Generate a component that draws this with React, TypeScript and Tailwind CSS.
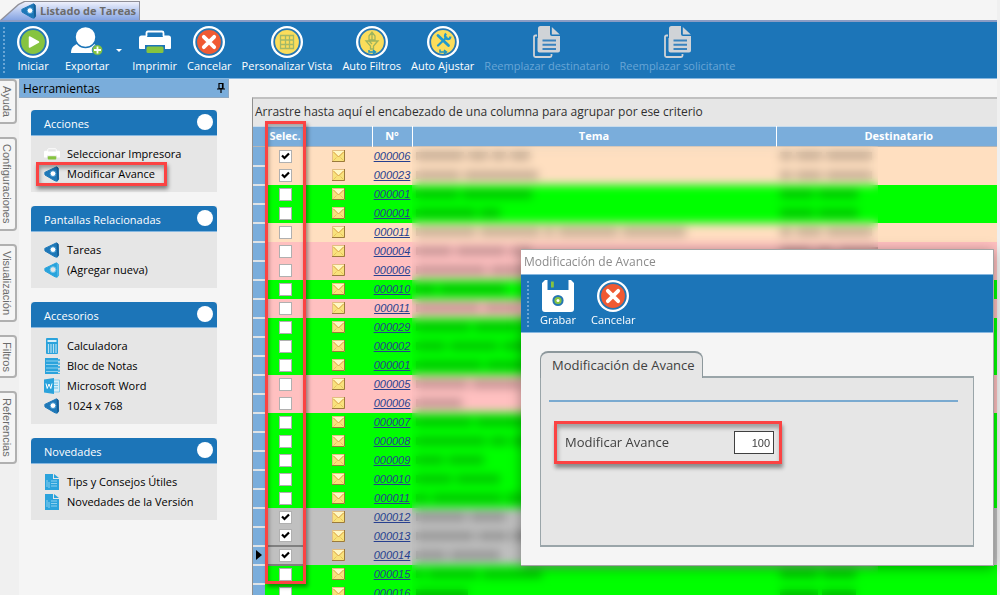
import type { ReactNode } from 'react';

type RowTone = 'peach' | 'green' | 'pink' | 'gray';

type TaskRow = {
  number: string;
  tone: RowTone;
  checked?: boolean;
  current?: boolean;
  subject: number[];
  person: number[];
};

const toneClasses: Record<RowTone, string> = {
  peach: 'bg-[#ffdfc0]',
  green: 'bg-[#00ff00]',
  pink: 'bg-[#ffc0c0]',
  gray: 'bg-[#c0c0c0]',
};

const rows: TaskRow[] = [
  { number: '000006', tone: 'peach', checked: true, subject: [48, 20, 14, 20], person: [12, 26, 46] },
  { number: '000023', tone: 'peach', checked: true, subject: [44, 74], person: [12, 26, 46] },
  { number: '000001', tone: 'green', subject: [42, 70], person: [34, 40] },
  { number: '000001', tone: 'green', subject: [60, 20], person: [34, 40] },
  { number: '000011', tone: 'peach', subject: [60, 60, 10, 60, 64], person: [12, 26, 46] },
  { number: '000004', tone: 'pink', subject: [36, 50, 20], person: [32, 18, 40] },
  { number: '000006', tone: 'pink', subject: [70, 40], person: [32, 40] },
  { number: '000010', tone: 'green', subject: [20, 66], person: [34, 40] },
  { number: '000011', tone: 'pink', subject: [64, 36], person: [34, 40] },
  { number: '000029', tone: 'green', subject: [54, 44, 20], person: [34, 40] },
  { number: '000002', tone: 'green', subject: [30, 48, 30], person: [34, 40] },
  { number: '000001', tone: 'green', subject: [66, 40], person: [34, 40] },
  { number: '000005', tone: 'pink', subject: [52, 50], person: [34, 40] },
  { number: '000006', tone: 'pink', subject: [46], person: [34, 40] },
  { number: '000007', tone: 'green', subject: [56, 50], person: [34, 40] },
  { number: '000008', tone: 'green', subject: [70, 18, 20], person: [34, 40] },
  { number: '000009', tone: 'green', subject: [28, 36], person: [34, 40] },
  { number: '000010', tone: 'green', subject: [36, 44], person: [34, 40] },
  { number: '000011', tone: 'green', subject: [12, 70, 20], person: [34, 40] },
  { number: '000012', tone: 'gray', checked: true, subject: [50, 36], person: [34, 40] },
  { number: '000013', tone: 'gray', checked: true, subject: [58, 30, 30], person: [34, 40] },
  { number: '000014', tone: 'gray', checked: true, current: true, subject: [30, 50], person: [34, 40] },
  { number: '000015', tone: 'green', subject: [8, 50, 60], person: [38, 34] },
  { number: '000016', tone: 'green', subject: [52], person: [38, 34] },
];

function DropIcon({ light = false, className = 'size-4' }: { light?: boolean; className?: string }) {
  return (
    <svg viewBox="0 0 16 16" className={className} aria-hidden="true">
      <path
        d="M12.6.8 14.200 2.500 14.600 13 13.200 15.200 11 14.800 1 9 .8 6.400Z"
        fill={light ? '#29a3dc' : '#1e78b8'}
        stroke={light ? '#29a3dc' : '#1e78b8'}
        strokeLinejoin="round"
      />
      <path d="m12.800.6 1.600 1.400.4 11-1.400 2.200-.6-8Z" fill={light ? '#4db5e5' : '#175d92'} />
      <circle cx="9" cy="7.600" r="2.900" fill={light ? '#e6e6e6' : '#fff'} stroke={light ? '#6cc4ec' : '#3b94cf'} />
    </svg>
  );
}

function PrinterIcon({ className = 'size-8' }: { className?: string }) {
  return (
    <svg viewBox="0 0 32 32" className={className} aria-hidden="true">
      <path d="M7.500 10V7q0-1.500 1.500-1.500h14Q24.500 5.500 24.500 7v3" fill="none" stroke="#fff" strokeWidth="1.800" />
      <path d="M0 22V12Q0 9.500 2.500 9.500h5l1 1.500h15l1-1.500h5Q32 9.500 32 12v10q0 1-1 1h-5v-4H6v4H1q-1 0-1-1Z" fill="#fff" />
      <rect x="7.500" y="20.500" width="17" height="6.500" rx="1.500" fill="#86c440" />
    </svg>
  );
}

function RingIcon({ fill, children }: { fill: string; children: ReactNode }) {
  return (
    <svg viewBox="0 0 32 32" className="size-8" aria-hidden="true">
      <circle cx="16" cy="16" r="16" fill="#fff" />
      <circle cx="16" cy="16" r="12.800" fill={fill} stroke="#2676b2" strokeWidth="1.800" />
      {children}
    </svg>
  );
}

function StartIcon() {
  return (
    <RingIcon fill="#86c440">
      <path d="M12.500 11v10l9-5Z" fill="#fff" stroke="#fff" strokeWidth="1.500" strokeLinejoin="round" />
    </RingIcon>
  );
}

function CancelIcon() {
  return (
    <RingIcon fill="#f05a33">
      <path d="m10.800 10.800 10.400 10.400m0-10.400-10.400 10.400" stroke="#fff" strokeWidth="3.800" strokeLinecap="round" />
    </RingIcon>
  );
}

function ExportIcon() {
  return (
    <svg viewBox="0 0 32 32" className="size-8" aria-hidden="true">
      <path d="M0 27c0-5 2-7.500 8-10h13c5 2 7 5 7 10Z" fill="#fff" />
      <circle cx="14.500" cy="11" r="10.500" fill="#fff" stroke="#1c75b8" strokeWidth="1.500" />
      <circle cx="26.500" cy="24" r="5.300" fill="#86c440" stroke="#1c75b8" strokeWidth=".8" />
      <path d="M26.500 20.500v7m-3.500-3.500h7" stroke="#fff" strokeWidth="1.800" />
    </svg>
  );
}

function GridIcon() {
  return (
    <RingIcon fill="#fbdd5b">
      <path d="M9.500 9.500h13v13h-13Zm5 0v13m4-13v13M9.500 14h13m-13 4.500h13" fill="none" stroke="#a3b968" strokeWidth="1.300" />
    </RingIcon>
  );
}

function FilterIcon() {
  return (
    <RingIcon fill="#fbdd5b">
      <path
        d="M16 6v8m-3-4 3-4 3 4v4h-6Zm-3 5h12l-4.500 5v3h-3v-3Zm3 0 3 3m6-3-3 3"
        fill="none"
        stroke="#9fb45d"
        strokeWidth="1.300"
      />
      <path d="M13 24v2h6m-2-2 2.500 2-2.500 2" fill="none" stroke="#1f93bd" strokeWidth="1.500" />
    </RingIcon>
  );
}

function AdjustIcon() {
  return (
    <RingIcon fill="#fbdd5b">
      <path d="m11 9.500 10.500 10" stroke="#2199cc" strokeWidth="2.800" strokeLinecap="round" />
      <path d="m19.500 11.500-8.500 8" stroke="#2199cc" strokeWidth="2.200" strokeLinecap="round" />
      <path d="M19 7.500q-2.500 3.500 1 5.500 3 .5 3.500-2.500" fill="none" stroke="#2199cc" strokeWidth="2.200" />
      <path d="M13 23.500v2.500h6m-2-2 2.500 2-2.500 2" fill="none" stroke="#1f93bd" strokeWidth="1.500" />
    </RingIcon>
  );
}

function CopyIcon() {
  return (
    <svg viewBox="0 0 32 32" className="size-8" aria-hidden="true">
      <path d="M6 9.500H4.500Q3 9.500 3 11v18.500Q3 31 4.500 31H19q1.500 0 1.500-1.500V28" fill="none" stroke="#d0d3d7" strokeWidth="1.800" />
      <path d="M9.500 0H19v8q0 2 2 2h8v14.500q0 2-2 2H8.500q-2 0-2-2V12H7V2.500Q7 0 9.500 0Z" fill="#d0d3d7" />
      <path d="m20.800 1 8 7.500h-8Z" fill="#d0d3d7" />
      <path d="M11.500 14.500H25m-13.500 4.300H25m-13.500 4.200H25" stroke="#3a83be" strokeWidth="2" />
    </svg>
  );
}

function SaveIcon() {
  return (
    <svg viewBox="0 0 32 32" className="size-8" aria-hidden="true">
      <path d="M3 0h2.500v10h21V0H29l3 3v26q0 3-3 3H3q-3 0-3-3V3Z" fill="#fff" />
      <rect x="9" y="1.500" width="2.800" height="6" fill="#86c440" />
      <circle cx="16" cy="20.500" r="4.600" fill="#86c440" stroke="#2676b2" strokeWidth="2" />
      <circle cx="16" cy="20.500" r="1.500" fill="#fff" />
    </svg>
  );
}

function CalculatorIcon() {
  return (
    <svg viewBox="0 0 16 16" className="size-4" aria-hidden="true">
      <rect x="2" y="0" width="12" height="16" rx="1" fill="#2ba3dc" />
      <path d="M3.500 2h9v2h-9Z" fill="#d8eef8" />
      <path d="M4.500 6v9m2.500-9v9m2.500-9v9m2.500-9v9" stroke="#b5dff2" strokeWidth="1.200" />
    </svg>
  );
}

function NotepadIcon() {
  return (
    <svg viewBox="0 0 16 16" className="size-4" aria-hidden="true">
      <path d="M1 0h13v16H1Z" fill="#2ba3dc" />
      <path d="M2 3h14M2 6.500h14M2 10h14M2 13.500h14" stroke="#8dd0ee" />
      <path d="M15 1v15" stroke="#2ba3dc" strokeDasharray="2 1.500" strokeWidth="1.500" />
    </svg>
  );
}

function WordIcon() {
  return (
    <svg viewBox="0 0 16 16" className="size-4" aria-hidden="true">
      <path d="M8 2h7.500v12H8Z" fill="#d8eef8" stroke="#72c3e8" strokeWidth=".8" />
      <path d="M10 5h4m-4 2.500h4M10 10h4" stroke="#72c3e8" />
      <path d="m0 1.500 10-1.500v16L0 14.500Z" fill="#2ba3dc" />
      <path d="m2 5.500 1.200 5L5 6l1.800 4.500 1.200-5" fill="none" stroke="#fff" />
    </svg>
  );
}

function PageIcon() {
  return (
    <svg viewBox="0 0 16 16" className="size-4" aria-hidden="true">
      <path d="M1 0h8v5h6v11H1Z" fill="#2ba3dc" />
      <path d="m10 0 5 4h-5Z" fill="#2ba3dc" />
      <path d="M7 7h6M7 9.500h6M7 12h6M3 6v7m2-5v6" stroke="#8dd0ee" />
    </svg>
  );
}

function MailIcon() {
  return (
    <svg viewBox="0 0 13 12" className="mx-auto h-3 w-[13px]" aria-hidden="true">
      <path d="M0 0h13v12H0Z" fill="#f8e27c" />
      <path d="M1 1h11L6.500 6.500Z" fill="#fff8c4" />
      <path d="M.5 11.500V.500h12" fill="none" stroke="#e3bd83" />
      <path d="M12.500 0v11.500H0" fill="none" stroke="#9b7a3c" />
      <path d="m1.500 2 5 5 5-5" fill="none" stroke="#d9a04a" />
      <path d="m1.500 10.500 3-3m7 3-3-3" fill="none" stroke="#e8c25c" />
    </svg>
  );
}

type ToolButtonProps = { label: string; icon: ReactNode; disabled?: boolean };

function ToolButton({ label, icon, disabled }: ToolButtonProps) {
  return (
    <button
      type="button"
      disabled={disabled}
      className="flex shrink-0 flex-col items-center whitespace-nowrap text-[11px] leading-4 text-white disabled:text-[#68a5d6]"
    >
      {icon}
      <span>{label}</span>
    </button>
  );
}

function Grip() {
  return <div className="my-px w-0 self-stretch border-l-2 border-dotted border-[#69a5d5]" />;
}

type PanelItem = { label: string; icon: ReactNode; highlighted?: boolean };

function SidePanel({ title, items }: { title: string; items: PanelItem[] }) {
  return (
    <section className="bg-[#e6e6e6]">
      <h2 className="flex h-[26px] items-center justify-between rounded-t border-b border-[#86b7e0] bg-[#1c75b8] pr-1 pl-[13px] text-[11px] text-white">
        <span className="pt-[3px]">{title}</span>
        <button type="button" aria-label={`Contraer ${title}`} className="mb-px size-4 rounded-full bg-white" />
      </h2>
      <ul className="py-2">
        {items.map((item) => (
          <li key={item.label} className="relative h-5 px-[13px]">
            <a href="#" className="flex h-full items-center gap-[7px] whitespace-nowrap">
              {item.icon}
              {item.label}
            </a>
            {item.highlighted && (
              <span className="absolute -inset-y-[2px] right-[50px] left-[5px] border-[3px] border-[#fb4343] shadow-[1px_3px_4px_rgba(0,0,0,0.45),inset_1px_3px_4px_rgba(0,0,0,0.35)]" />
            )}
          </li>
        ))}
      </ul>
    </section>
  );
}

function Smudges({ widths }: { widths: number[] }) {
  return (
    <div className="flex gap-1 pl-1" aria-hidden="true">
      {widths.map((width, i) => (
        <span key={i} className="h-2 shrink-0 bg-black/25" style={{ width }} />
      ))}
    </div>
  );
}

function TaskTable() {
  const headCell = 'border-r border-white p-0 font-bold';
  return (
    <div className="relative">
      <table className="w-full table-fixed border-collapse">
        <colgroup>
          <col className="w-3" />
          <col className="w-10" />
          <col className="w-[67px]" />
          <col className="w-10" />
          <col />
          <col className="w-[221px]" />
        </colgroup>
        <thead>
          <tr className="h-5 border-y border-t-[#c9dcec] border-b-[#b5b5b5] bg-[#7aaddb] text-white">
            <th className="p-0" aria-label="Fila" />
            <th className="p-0 font-bold">Selec.</th>
            <th className={headCell} aria-label="Correo" />
            <th className={headCell}>N°</th>
            <th className={headCell}>Tema</th>
            <th className="p-0 font-bold">
              <span className="pl-6">Destinatario</span>
            </th>
          </tr>
        </thead>
        <tbody>
          {rows.map((row, i) => (
            <tr key={i} className={`h-[19px] ${toneClasses[row.tone]}`}>
              <td className="border-b-2 border-[#dfe3e6] bg-[#7aaddb] p-0">
                {row.current && (
                  <svg viewBox="0 0 6 10" className="ml-[3px] h-[10px] w-[6px]" aria-hidden="true">
                    <path d="M0 0v10l6-5Z" />
                  </svg>
                )}
              </td>
              <td className={row.current ? 'border-y-2 border-[#808080] p-0' : 'p-0'}>
                <div className="relative mx-auto size-[13px]">
                  <input
                    type="checkbox"
                    defaultChecked={row.checked}
                    aria-label={`Seleccionar ${row.number}`}
                    className="peer block size-[13px] appearance-none border border-[#b0b0b0] bg-white"
                  />
                  <svg
                    viewBox="0 0 13 13"
                    className="pointer-events-none absolute inset-0 hidden peer-checked:block"
                    aria-hidden="true"
                  >
                    <path d="M3 5.500 5.500 8 10 3.500" fill="none" stroke="#000" strokeWidth="2.200" />
                  </svg>
                </div>
              </td>
              <td className="p-0">
                <MailIcon />
              </td>
              <td className="p-0 text-center leading-[14px]">
                <a href="#" className="font-['Liberation_Sans',sans-serif] text-[11px] text-[#27408f] italic underline">
                  {row.number}
                </a>
              </td>
              <td className="p-0">
                <Smudges widths={row.subject} />
              </td>
              <td className="p-0">
                <Smudges widths={row.person} />
              </td>
            </tr>
          ))}
        </tbody>
      </table>
      <div className="absolute top-5 right-[119px] bottom-0 left-[159px] backdrop-blur-[5px]" />
      <div className="absolute -top-[5px] left-3 h-[463px] w-[41px] border-[3px] border-[#fb4343] shadow-[2px_3px_4px_rgba(0,0,0,0.4),inset_1px_3px_4px_rgba(0,0,0,0.3)]" />
    </div>
  );
}

function ProgressDialog() {
  return (
    <div
      role="dialog"
      aria-labelledby="dialog-title"
      className="absolute top-[249px] right-[6px] w-[473px] border border-l-0 border-[#a5a5a5] bg-[#f5f5f5] text-[#404040] shadow-[0_2px_12px_rgba(0,0,0,0.35)]"
    >
      <h2 id="dialog-title" className="h-6 bg-white px-[3px] text-[12px] leading-6 text-[#8b8b8b]">
        Modificación de Avance
      </h2>
      <div className="flex h-[59px] items-start gap-[15px] border-y border-[#86b7e0] bg-[#1c75b8] px-[6px] pt-[5px] pb-1">
        <div className="flex items-start gap-[11px]">
          <Grip />
          <ToolButton label="Grabar" icon={<SaveIcon />} />
        </div>
        <ToolButton label="Cancelar" icon={<CancelIcon />} />
      </div>
      <div className="px-[19px] py-[18px]">
        <div role="tablist" className="flex">
          <button
            type="button"
            role="tab"
            aria-selected="true"
            className="relative z-10 -mb-[2px] h-[27px] rounded-t-lg border border-t-2 border-b-0 border-[#8d989c] bg-[#e6e6e6] pr-[7px] pl-[11px] text-[13px]"
          >
            Modificación de Avance
          </button>
        </div>
        <div className="border border-y-2 border-[#9aa5a9] bg-[#e6e6e6] px-2 pt-[22px] pb-[81px]">
          <hr className="mr-[7px] border-t-2 border-[#7aaad0]" />
          <div className="mt-[19px] ml-[5px] flex h-[43px] w-[228px] items-center justify-between border-[3px] border-[#fb4343] pr-[5px] pl-2 text-[13px] shadow-[1px_4px_4px_rgba(0,0,0,0.4),inset_1px_4px_4px_rgba(0,0,0,0.3)]">
            <label htmlFor="progress">Modificar Avance</label>
            <input
              id="progress"
              defaultValue="100"
              className="h-[23px] w-10 border border-[#404040] bg-white pr-[3px] text-right font-['Liberation_Sans',sans-serif] text-[11px]"
            />
          </div>
        </div>
      </div>
    </div>
  );
}

export default function App() {
  const sideTabs = ['Ayuda', 'Configuraciones', 'Visualización', 'Filtros', 'Referencias'];

  return (
    <div className="relative flex h-screen flex-col overflow-hidden bg-[#f0f0f0] pr-[3px] font-['Open_Sans',sans-serif] text-[11px] text-black">
      <header>
        <div className="flex h-5 items-end bg-[#f5f5f5]">
          <div className="bg-[#8f8f98] pt-px pr-px [clip-path:polygon(0_100%,18px_3px,24px_0,100%_0,100%_100%)]">
            <h1 className="flex h-[18px] items-center gap-[3px] bg-linear-to-b from-[#eef0fb] to-[#86a4e2] pr-[3px] pl-[21px] text-[11px] font-bold text-[#6b6b6b] [clip-path:polygon(2px_100%,19px_3px,25px_0,100%_0,100%_100%)]">
              <DropIcon />
              Listado de Tareas
            </h1>
          </div>
        </div>
        <div className="flex h-[59px] items-start gap-[10px] border-t-2 border-b border-t-[#8b9cc4] border-b-[#86b7e0] bg-[#1c75b8] pt-1 pl-[3px]">
          <div className="flex items-start gap-3">
            <Grip />
            <ToolButton label="Iniciar" icon={<StartIcon />} />
          </div>
          <div className="ml-[6px] flex items-center gap-[7px]">
            <ToolButton label="Exportar" icon={<ExportIcon />} />
            <button type="button" aria-label="Opciones de exportación" className="border-x-[3px] border-t-[3px] border-x-transparent border-t-white" />
          </div>
          <ToolButton label="Imprimir" icon={<PrinterIcon />} />
          <ToolButton label="Cancelar" icon={<CancelIcon />} />
          <ToolButton label="Personalizar Vista" icon={<GridIcon />} />
          <ToolButton label="Auto Filtros" icon={<FilterIcon />} />
          <ToolButton label="Auto Ajustar" icon={<AdjustIcon />} />
          <ToolButton label="Reemplazar destinatario" icon={<CopyIcon />} disabled />
          <ToolButton label="Reemplazar solicitante" icon={<CopyIcon />} disabled />
        </div>
      </header>

      <div className="flex min-h-0 flex-1">
        <nav className="flex w-[19px] shrink-0 flex-col items-start gap-[13px]">
          {sideTabs.map((tab) => (
            <button
              key={tab}
              type="button"
              className="w-[17px] rounded-r border-2 border-l-0 border-[#b0b0b0] bg-[#f5f5f5] pt-[5px] pr-px pb-[5px] font-['Liberation_Sans',sans-serif] text-[11px] leading-[14px] text-[#6b6b6b] [writing-mode:vertical-rl]"
            >
              {tab}
            </button>
          ))}
        </nav>

        <aside className="w-[210px] shrink-0 bg-[#f5f5f5]">
          <h2 className="flex h-[19px] items-center justify-between border border-t-0 border-[#8fa9c2] bg-[#7aaddb] px-[3px] text-[12px]">
            <span className="pt-[2px]">Herramientas</span>
            <svg viewBox="0 0 8 10" className="h-[10px] w-2" aria-label="Fijar">
              <path d="M2 .5h4v5H2ZM0 6h8M4 6v4M5.500.500v5" fill="none" stroke="#000" strokeWidth="1.200" />
            </svg>
          </h2>
          <div className="flex flex-col gap-[14px] px-3 pt-3">
            <SidePanel
              title="Acciones"
              items={[
                { label: 'Seleccionar Impresora', icon: <PrinterIcon className="size-4" /> },
                { label: 'Modificar Avance', icon: <DropIcon />, highlighted: true },
              ]}
            />
            <SidePanel
              title="Pantallas Relacionadas"
              items={[
                { label: 'Tareas', icon: <DropIcon /> },
                { label: '(Agregar nueva)', icon: <DropIcon light /> },
              ]}
            />
            <SidePanel
              title="Accesorios"
              items={[
                { label: 'Calculadora', icon: <CalculatorIcon /> },
                { label: 'Bloc de Notas', icon: <NotepadIcon /> },
                { label: 'Microsoft Word', icon: <WordIcon /> },
                { label: '1024 x 768', icon: <DropIcon /> },
              ]}
            />
            <SidePanel
              title="Novedades"
              items={[
                { label: 'Tips y Consejos Útiles', icon: <PageIcon /> },
                { label: 'Novedades de la Versión', icon: <PageIcon /> },
              ]}
            />
          </div>
        </aside>

        <main className="min-w-0 flex-1 bg-[#f5f5f5] pt-[18px] pl-[23px]">
          <div className="border-t-2 border-l border-t-[#c0c0c0] border-l-[#8f8f8f]">
            <p className="h-[27px] truncate bg-[#e6e6e6] px-[2px] text-[12px] leading-[26px] text-[#303030]">
              Arrastre hasta aquí el encabezado de una columna para agrupar por ese criterio
            </p>
            <TaskTable />
          </div>
        </main>
      </div>

      <ProgressDialog />
    </div>
  );
}
